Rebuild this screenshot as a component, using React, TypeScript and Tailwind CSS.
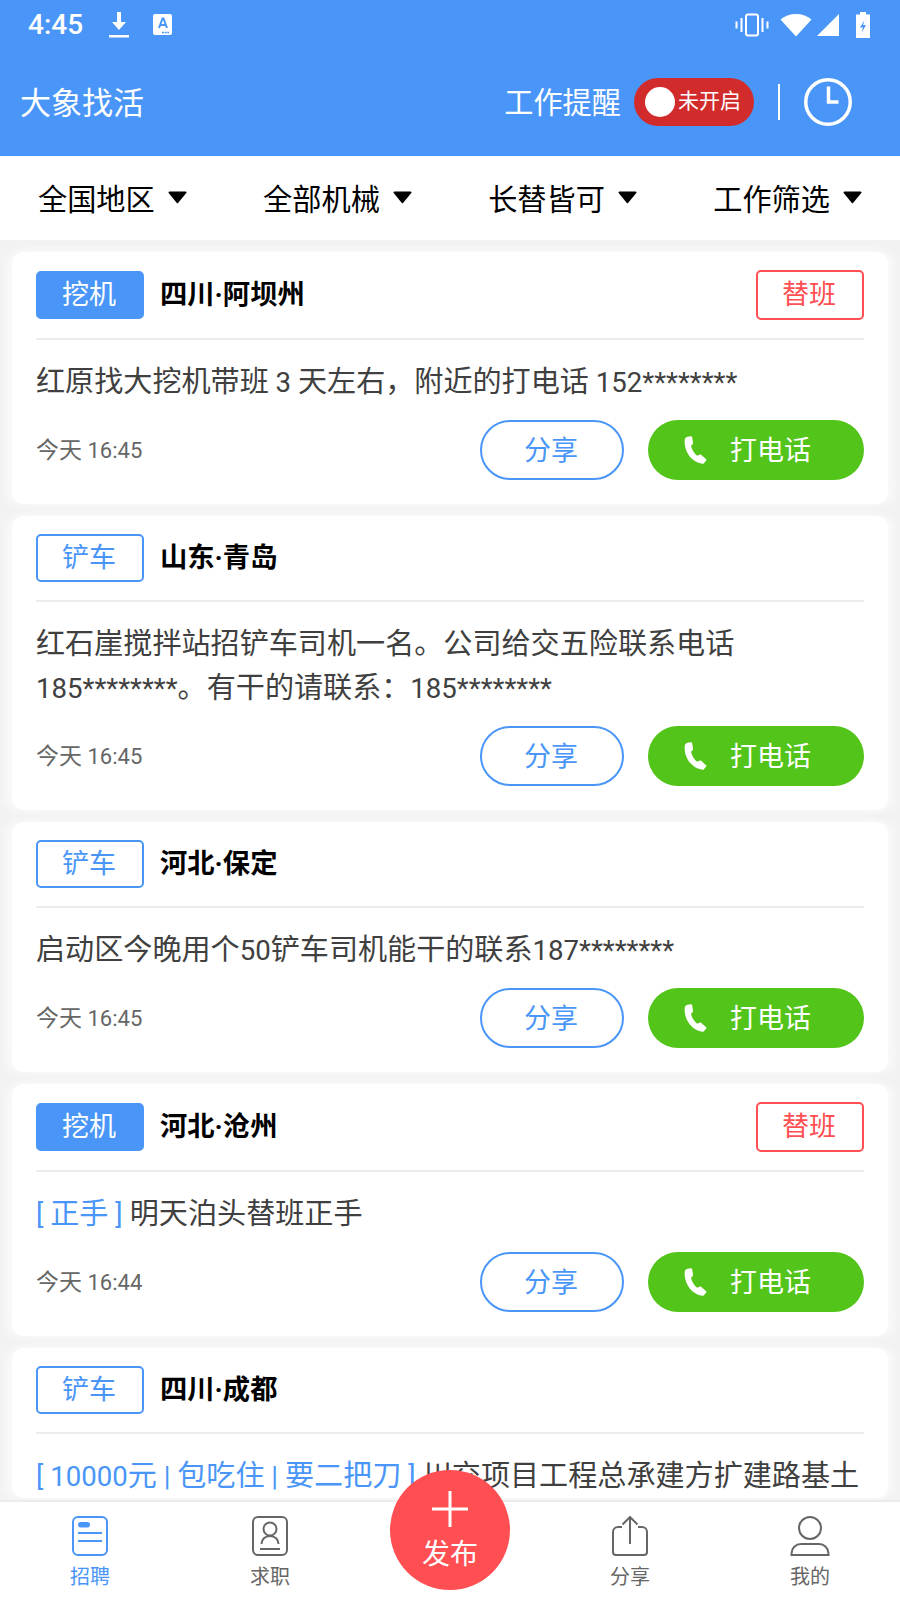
import { ReactNode } from "react";

const CJK = "font-['Roboto','Noto_Sans_CJK_SC',sans-serif]";

type Job = {
	type: string;
	solid: boolean;
	place: string;
	shift?: boolean;
	tags?: string;
	body: string;
	time: string;
	clipped?: boolean;
};

const jobs: Job[] = [
	{ type: "挖机", solid: true, place: "四川·阿坝州", shift: true, body: "红原找大挖机带班 3 天左右，附近的打电话 152********", time: "今天 16:45" },
	{ type: "铲车", solid: false, place: "山东·青岛", body: "红石崖搅拌站招铲车司机一名。公司给交五险联系电话185********。有干的请联系：185********", time: "今天 16:45" },
	{ type: "铲车", solid: false, place: "河北·保定", body: "启动区今晚用个50铲车司机能干的联系187********", time: "今天 16:45" },
	{ type: "挖机", solid: true, place: "河北·沧州", shift: true, tags: "[ 正手 ]", body: "明天泊头替班正手", time: "今天 16:44" },
	{ type: "铲车", solid: false, place: "四川·成都", tags: "[ 10000元 | 包吃住 | 要二把刀 ]", body: "川交项目工程总承建方扩建路基土", time: "今天 16:44", clipped: true },
];

// latin runs are set a touch smaller than the CJK around them
function mixed(text: string, latinClass: string): ReactNode[] {
	return text.split(/([\x20-\x7e]+)/).map((run, i) =>
		i % 2 === 1 ? (
			<span key={i} className={latinClass}>
				{run}
			</span>
		) : (
			run
		),
	);
}

function StatusBar() {
	return (
		<div className="flex h-[50px] items-center pl-[28px] pr-[30px] text-white">
			<span className="text-[28px] font-medium leading-none">4:45</span>
			<svg className="ml-[25px]" width="22" height="28" viewBox="0 0 22 28" fill="white">
				<path d="M9 1h4v10h5l-7 8-7-8h5z" />
				<rect x="1" y="24" width="20" height="2.5" />
			</svg>
			<svg className="ml-[23px]" width="20" height="22" viewBox="0 0 20 22">
				<rect width="19" height="21" rx="2" fill="white" />
				<path d="M6 14 9.500 4.500h1L14 14M7.300 11h5.400" stroke="#4a96f8" strokeWidth="2" fill="none" />
				<path d="M9 18.500h7" stroke="#4a96f8" strokeWidth="1.500" strokeDasharray="2 .7" />
			</svg>
			<svg className="ml-auto" width="34" height="24" viewBox="0 0 34 24" fill="none" stroke="white" strokeWidth="2">
				<rect x="11" y="1.500" width="12" height="21" rx="2" />
				<path d="M6.500 5v14M27.500 5v14M1.500 8.500v7M32.500 8.500v7" />
			</svg>
			<svg className="ml-[11px]" width="32" height="24" viewBox="0 0 32 24" fill="white">
				<path d="M16 23.500 .500 6.500C4.500 3 10 1 16 1s11.500 2 15.500 5.500z" />
			</svg>
			<svg className="ml-[5px]" width="23" height="22" viewBox="0 0 23 22" fill="white">
				<path d="M22 0v22H0z" />
			</svg>
			<svg className="ml-[16px]" width="14" height="26" viewBox="0 0 14 26">
				<path d="M4 0h6v2.500h4V26H0V2.500h4z" fill="white" />
				<path d="M8.500 8 4 15.500h3L5.500 21 10 13H7z" fill="#4a96f8" />
			</svg>
		</div>
	);
}

function Header() {
	return (
		<div className={`h-[156px] bg-[#4a96f8] text-white ${CJK}`}>
			<StatusBar />
			<div className="flex h-[104px] items-center pl-[20px]">
				<span className="pt-[4px] text-[31px]">大象找活</span>
				<span className="ml-auto pt-[4px] text-[29.200px]">工作提醒</span>
				<div className="ml-[13px] flex h-[48px] w-[120px] items-center rounded-full bg-[#d22b2b] pl-[11px]">
					<span className="size-[30px] rounded-full bg-white" />
					<span className="ml-[3px] text-[21px]">未开启</span>
				</div>
				<span className="ml-[24px] h-[36px] w-[2px] bg-white" />
				<svg className="ml-[24px] mr-[48px]" width="48" height="48" viewBox="0 0 48 48" fill="none" stroke="white" strokeWidth="3.500">
					<circle cx="24" cy="24" r="22.250" />
					<path d="M24.500 8.500v15.500h10" />
				</svg>
			</div>
		</div>
	);
}

function FilterBar() {
	const items = ["全国地区", "全部机械", "长替皆可", "工作筛选"];
	return (
		<div className={`flex h-[84px] items-center justify-between bg-white px-[38px] text-black ${CJK}`}>
			{items.map((label) => (
				<div key={label} className="flex items-center gap-[13px]">
					<span className="pt-[6px] text-[29.200px]">{label}</span>
					<svg width="19" height="13" viewBox="0 0 19 13" fill="black">
						<path d="M1.500 0.500h16a1 1 0 0 1 .8 1.600L10 12a.8.8 0 0 1-1.200 0L.7 2.100A1 1 0 0 1 1.500.5z" />
					</svg>
				</div>
			))}
		</div>
	);
}

function JobCard({ job }: { job: Job }) {
	return (
		<div
			className={`shrink-0 rounded-[12px] bg-white px-[24px] pt-[18px] shadow-[-6px_0_8px_#fafafa,6px_0_8px_#fafafa] ${job.clipped ? "" : "pb-[24px]"}`}
		>
			<div className="flex items-center">
				<span
					className={`flex h-[48px] w-[108px] items-center justify-center rounded-[5px] border-2 border-[#4a96f8] pr-[2px] text-[27px] ${job.solid ? "bg-[#4a96f8] text-white" : "text-[#4a96f8]"}`}
				>
					{job.type}
				</span>
				<span className="ml-[16px] text-[27.300px] font-bold text-black">{job.place}</span>
				{job.shift && (
					<span className="ml-auto flex h-[50px] w-[108px] items-center justify-center rounded-[5px] border-2 border-[#ff4f53] pr-[2px] text-[27px] text-[#ff4f53]">
						替班
					</span>
				)}
			</div>
			<div className="mt-[18px] h-[2px] bg-[#ececec]" />
			<p className="mt-[20px] text-[29.100px] leading-[44px] text-[#404040]">
				{job.tags && <span className="text-[#4a96f8]">{mixed(job.tags, "text-[27.600px] leading-none")} </span>}
				{mixed(job.body, "text-[27.600px] leading-none")}
			</p>
			{!job.clipped && (
				<div className="mt-[16px] flex h-[60px] items-center">
					<span className="pt-[2px] text-[23px] text-[#666]">{mixed(job.time, "text-[22px] leading-none")}</span>
					<span className="ml-auto flex h-[60px] w-[144px] items-center justify-center rounded-full border-2 border-[#4a96f8] pr-[2px] pt-[2px] text-[27px] text-[#4a96f8]">
						分享
					</span>
					<span className="ml-[24px] flex h-[60px] w-[216px] items-center gap-[23px] rounded-full bg-[#52c41a] pl-[35px] text-[27px] text-white">
						<svg width="24" height="28" viewBox="0 0 24 28" fill="white">
							<path d="M4.500.800 8 .2c.6-.1 1 .2 1.100.7l1 6.200c.1.500-.1.900-.5 1.200L8 9.700c.8 3.800 3 7.500 6.200 10l2.700-1.200c.4-.2.900-.1 1.200.2l5 4.600c.4.400.4.900.1 1.300l-2.300 2.600c-.4.400-1 .6-1.600.5C9 26.300 1 16 1.700 4.500c0-1.800 1.100-3.400 2.800-3.700z" />
						</svg>
						<span className="pt-[2px]">打电话</span>
					</span>
				</div>
			)}
		</div>
	);
}

function NavIcon({ name }: { name: string }) {
	if (name === "招聘") {
		return (
			<svg width="36" height="40" viewBox="0 0 36 40" fill="none" stroke="#4a96f8" strokeWidth="2">
				<rect x="1" y="1" width="34" height="38" rx="5" />
				<rect x="6" y="6" width="12" height="5.500" rx="2.750" fill="#4a96f8" stroke="none" />
				<path d="M6 17h24M6 25h24" />
			</svg>
		);
	}
	if (name === "求职") {
		return (
			<svg width="36" height="40" viewBox="0 0 36 40" fill="none" stroke="#666" strokeWidth="2">
				<rect x="1" y="1" width="34" height="38" rx="5" />
				<circle cx="18" cy="13" r="6.500" />
				<path d="M9.500 28c0-4.500 3.500-8 8.500-8s8.500 3.500 8.500 8M8 33h20" />
			</svg>
		);
	}
	if (name === "分享") {
		return (
			<svg width="36" height="40" viewBox="0 0 36 40" fill="none" stroke="#666" strokeWidth="2">
				<path d="M10 11H6a5 5 0 0 0-5 5v20a3 3 0 0 0 3 3h28a3 3 0 0 0 3-3V16a5 5 0 0 0-5-5h-4" />
				<path d="M18 28V1M10.500 8.500 18 1l7.500 7.500" />
			</svg>
		);
	}
	return (
		<svg width="40" height="40" viewBox="0 0 40 40" fill="none" stroke="#666" strokeWidth="2">
			<circle cx="20" cy="12" r="11" />
			<path d="M11 28h18a9.500 9.500 0 0 1 9.500 9.500V39H1.500v-1.500A9.500 9.500 0 0 1 11 28z" />
		</svg>
	);
}

function BottomNav() {
	const left = ["招聘", "求职"];
	const right = ["分享", "我的"];
	const tab = (name: string) => (
		<div key={name} className="flex w-[180px] flex-col items-center">
			<div className="flex h-[40px] items-center">
				<NavIcon name={name} />
			</div>
			<span className={`mt-[7px] text-[20px] leading-[28px] ${name === "招聘" ? "text-[#4a96f8]" : "text-[#666]"}`}>{name}</span>
		</div>
	);
	return (
		<div className="relative flex h-[100px] shrink-0 justify-between border-t-2 border-[#ececec] bg-white pt-[14px]">
			<div className="flex">{left.map(tab)}</div>
			<div className="flex">{right.map(tab)}</div>
			{/* publish button sits over the bar and the list */}
			<div className="absolute left-[390px] top-[-32px] flex size-[120px] flex-col items-center rounded-full bg-[#ff4f53] text-white">
				<svg className="mt-[20px]" width="38" height="38" viewBox="0 0 38 38" fill="white">
					<rect x="17.500" y="1" width="3" height="36" />
					<rect x="1" y="17.500" width="36" height="3" />
				</svg>
				<span className="mt-[7px] text-[28px] leading-[40px]">发布</span>
			</div>
		</div>
	);
}

export default function App() {
	return (
		<div className={`flex h-[1600px] w-[900px] flex-col overflow-hidden bg-[#f2f2f2] ${CJK}`}>
			<Header />
			<FilterBar />
			<div className="flex min-h-0 flex-1 flex-col gap-[12px] overflow-hidden px-[12px] pt-[12px]">
				{jobs.map((job) => (
					<JobCard key={job.place} job={job} />
				))}
			</div>
			<BottomNav />
		</div>
	);
}
